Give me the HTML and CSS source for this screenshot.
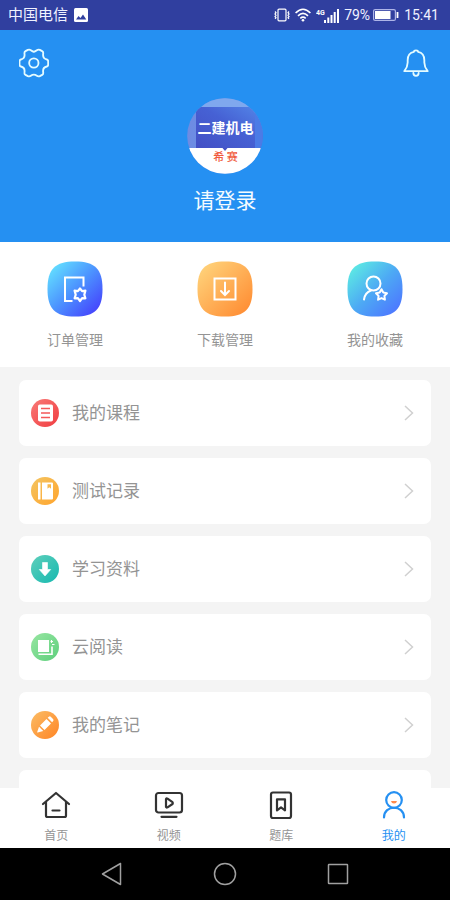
FILE: index.html
```html
<!DOCTYPE html>
<html lang="zh-CN">
<head>
<meta charset="utf-8">
<meta name="viewport" content="width=device-width, initial-scale=1">
<title>我的</title>
<link rel="stylesheet" href="styles.css">
</head>
<body>
<div class="status">
  <span class="carrier">中国电信</span>
  <svg class="photo" width="14" height="14" viewBox="0 0 14 14"><rect width="14" height="14" rx="1.5" fill="#fff"/><path d="M2 11.500 4.500 8l2 2L9 6.500l3.300 5z" fill="#303f9f"/></svg>
  <span class="signals">
    <svg width="16" height="14" viewBox="0 0 16 14" fill="none" stroke="#fff" stroke-width="1.200"><rect x="4" y="1.200" width="8" height="11.600" rx="1"/><path d="M1 3.500 2 4.700 1 6l1 1.300L1 8.500l1 1.300-1 1M15 3.500 14 4.700 15 6l-1 1.300 1 1.200-1 1.300 1 1"/></svg>
    <svg width="16" height="14" viewBox="0 0 16 14" fill="none" stroke="#fff" stroke-width="1.600"><path d="M.6 5Q8-2.500 15.400 5M3 7.800q5-4.700 10 0M5.300 10.300q2.700-2.400 5.400 0"/><circle cx="8" cy="12.200" r="1.300" fill="#fff" stroke="none"/></svg>
    <svg width="23" height="15" viewBox="0 0 23 15"><text x="0" y="7" class="net">4G</text><path d="M8 12h2v3H8zM11.300 9.500h2V15h-2zM14.500 7h2v8h-2zM17.700 4h2v11h-2zM21 1h2v14h-2z" fill="#fff"/></svg>
    <span class="level">79%</span>
    <svg width="26" height="12" viewBox="0 0 26 12"><rect x=".6" y=".6" width="21.800" height="10.800" rx="1.500" fill="none" stroke="#aeb5e8" stroke-width="1.200"/><rect x="2" y="2" width="15.500" height="8" fill="#fff"/><path d="M24.500 3v6" stroke="#fff" stroke-width="1.800"/></svg>
    <time>15:41</time>
  </span>
</div>

<header class="profile">
  <div class="tools">
    <button type="button" aria-label="设置"><svg width="30" height="30" viewBox="58.500 143.500 90 90" fill="none" stroke="#e4fbff" stroke-width="5.500" stroke-linejoin="round"><path d="M103 155Q108 153 112 150Q116 147 121 149L128 153Q132 155 131 161Q129 175 142 178Q146 179 146 184V193Q146 198 142 199Q129 202 131 216Q132 222 128 224L121 228Q116 230 112 227Q103 220 94 227Q90 230 85 228L78 224Q74 222 75 216Q77 202 64 199Q60 198 60 193V184Q60 179 64 178Q77 175 75 161Q74 155 78 153L85 149Q90 147 94 150Q98 153 103 155Z"/><circle cx="103" cy="188.500" r="14"/></svg></button>
    <button type="button" aria-label="消息"><svg width="30" height="30" viewBox="527 144.500 90 90" fill="none" stroke="#e4fbff" stroke-width="5.500" stroke-linecap="round" stroke-linejoin="round"><path d="M537 214C544 205 547 199 547 188V181C547 167 555 158 566 156C566 150 578 150 578 156C589 158 597 167 597 181V188C597 199 600 205 607 214ZM564 219C564 231 580 231 580 219"/></svg></button>
  </div>
  <svg class="avatar" width="76" height="76" viewBox="0 0 76 76">
    <defs>
      <linearGradient id="face" x1="0" y1="1" x2="1" y2="0"><stop offset="0" stop-color="#434fc4"/><stop offset=".55" stop-color="#4661d4"/><stop offset="1" stop-color="#5487e8"/></linearGradient>
      <linearGradient id="edge" x1="0" x2="1"><stop offset="0" stop-color="#6f8be2"/><stop offset="1" stop-color="#5a9bf0"/></linearGradient>
      <clipPath id="round"><circle cx="38" cy="38" r="37.800"/></clipPath>
    </defs>
    <g clip-path="url(#round)">
      <rect width="76" height="76" fill="url(#edge)"/>
      <rect width="76" height="9" fill="#7fa8ee"/>
      <rect x="9" y="9" width="67" height="42" fill="url(#face)"/>
      <rect x="68" y="9" width="8" height="42" fill="#4b7be6"/>
      <rect y="50" width="76" height="26" fill="#fff"/>
      <path d="M35.500 50h5L38 53z" fill="#4450c4"/>
      <text x="38.500" y="35" class="badge-title">二建机电</text>
      <text x="38.500" y="63" class="badge-brand">希 赛</text>
    </g>
  </svg>
  <a class="login" href="#">请登录</a>
</header>

<nav class="shortcuts" aria-label="管理">
  <a href="#">
    <svg width="56" height="56" viewBox="0 0 56 56"><defs><linearGradient id="g1" x1=".1" y1=".1" x2=".9" y2=".9"><stop offset="0" stop-color="#62dcff"/><stop offset=".5" stop-color="#4c92ff"/><stop offset="1" stop-color="#4545fc"/></linearGradient></defs><path d="M28 .5C48 .5 55.500 8 55.500 28S48 55.500 28 55.500.5 48 .5 28 8 .5 28 .5Z" fill="url(#g1)"/><path d="M25.500 40H18V16.500h18.500v9" fill="none" stroke="#fff" stroke-width="2"/><path d="m33 27.500 2.100 2.600 3.300-.5-1.100 4.100 1.100 3.600-3.300-.2L33 40l-2.100-2.900-3.300.2 1.100-3.600-1.100-4.100 3.300.5z" fill="none" stroke="#fff" stroke-width="2.200" stroke-linejoin="round"/></svg>
    <span>订单管理</span>
  </a>
  <a href="#">
    <svg width="56" height="56" viewBox="0 0 56 56"><defs><linearGradient id="g2" x1=".1" y1=".1" x2=".9" y2=".9"><stop offset="0" stop-color="#ffd078"/><stop offset="1" stop-color="#ff8f35"/></linearGradient></defs><path d="M28 .5C48 .5 55.500 8 55.500 28S48 55.500 28 55.500.5 48 .5 28 8 .5 28 .5Z" fill="url(#g2)"/><path d="M17.500 17.500h21v21h-21zM28 21.500v12M24 30l4 4 4-4" fill="none" stroke="#fff" stroke-width="2" stroke-linecap="round"/></svg>
    <span>下载管理</span>
  </a>
  <a href="#">
    <svg width="56" height="56" viewBox="0 0 56 56"><defs><linearGradient id="g3" x1=".1" y1=".1" x2=".9" y2=".9"><stop offset="0" stop-color="#5ce8e4"/><stop offset=".5" stop-color="#4daaf4"/><stop offset="1" stop-color="#4d78ff"/></linearGradient></defs><path d="M28 .5C48 .5 55.500 8 55.500 28S48 55.500 28 55.500.5 48 .5 28 8 .5 28 .5Z" fill="url(#g3)"/><g fill="none" stroke="#fff" stroke-width="2" stroke-linecap="round" stroke-linejoin="round"><circle cx="26.500" cy="22.500" r="7"/><path d="M24 29.500q-6 2-7 9"/><path d="m34.500 28.200 1.800 3.300 3.700.7-2.600 2.700.5 3.800-3.400-1.600-3.400 1.600.5-3.800-2.600-2.700 3.700-.7z" fill="#4e96fa"/></g></svg>
    <span>我的收藏</span>
  </a>
</nav>

<main class="list">
  <a class="card" href="#">
    <svg width="28" height="28" viewBox="0 0 28 28"><defs><linearGradient id="r1" x2="1" y2="1"><stop offset="0" stop-color="#f97a77"/><stop offset="1" stop-color="#f03c40"/></linearGradient></defs><circle cx="14" cy="14" r="14" fill="url(#r1)"/><rect x="7" y="5.500" width="15" height="17" rx="1.800" fill="#fff"/><path d="M10 9.500h9M10 14h9M10 18.500h9" stroke="#f4585a" stroke-width="1.700"/></svg>
    <span>我的课程</span>
    <svg class="chevron" width="10" height="16" viewBox="0 0 10 16"><path d="m1 1 7.500 7L1 15"/></svg>
  </a>
  <a class="card" href="#">
    <svg width="28" height="28" viewBox="0 0 28 28"><defs><linearGradient id="r2" x2="1" y2="1"><stop offset="0" stop-color="#f4c562"/><stop offset="1" stop-color="#ffa42c"/></linearGradient></defs><circle cx="14" cy="14" r="14" fill="url(#r2)"/><path d="M7 5.500h2.500v17H7zM11 5.500h10a1 1 0 0 1 1 1v15a1 1 0 0 1-1 1H11z" fill="#fff"/><path d="M16.500 7.200H20v4.600l-1.700-1.500-1.800 1.500z" fill="#f7b84b"/></svg>
    <span>测试记录</span>
    <svg class="chevron" width="10" height="16" viewBox="0 0 10 16"><path d="m1 1 7.500 7L1 15"/></svg>
  </a>
  <a class="card" href="#">
    <svg width="28" height="28" viewBox="0 0 28 28"><defs><linearGradient id="r3" x2="1" y2="1"><stop offset="0" stop-color="#5fcfbb"/><stop offset="1" stop-color="#16b9b0"/></linearGradient></defs><circle cx="14" cy="14" r="14" fill="url(#r3)"/><path d="M11.500 7.500h5v7h3.200L14 21l-5.700-6.500h3.200z" fill="#fff" stroke="#fff" stroke-width=".6" stroke-linejoin="round"/></svg>
    <span>学习资料</span>
    <svg class="chevron" width="10" height="16" viewBox="0 0 10 16"><path d="m1 1 7.500 7L1 15"/></svg>
  </a>
  <a class="card" href="#">
    <svg width="28" height="28" viewBox="0 0 28 28"><defs><linearGradient id="r4" x2="1" y2="1"><stop offset="0" stop-color="#98e6a2"/><stop offset="1" stop-color="#5dcf7c"/></linearGradient></defs><circle cx="14" cy="14" r="14" fill="url(#r4)"/><path d="M7 7h11v12H7z" fill="#fff"/><path d="M7.500 21.200H21V13.500" fill="none" stroke="#fff" stroke-width="1.600"/><path d="M20.500 7v3M19.500 8.500h2.500M21 11.500h2.500" stroke="#fff" stroke-width="1.100"/></svg>
    <span>云阅读</span>
    <svg class="chevron" width="10" height="16" viewBox="0 0 10 16"><path d="m1 1 7.500 7L1 15"/></svg>
  </a>
  <a class="card" href="#">
    <svg width="28" height="28" viewBox="0 0 28 28"><defs><linearGradient id="r5" x2="1" y2="1"><stop offset="0" stop-color="#fbbd66"/><stop offset="1" stop-color="#ff8424"/></linearGradient></defs><circle cx="14" cy="14" r="14" fill="url(#r5)"/><path d="m9 14.500 6.500-6.500 4.500 4.500-6.500 6.500zM16.700 6.800l1.100-1.100q1.200-.8 2.200.2l2 2q1 1 .2 2.200l-1.100 1.100zM8 15.700l4.300 4.300-5.600 1.600q-.7 0-.5-.6z" fill="#fff"/></svg>
    <span>我的笔记</span>
    <svg class="chevron" width="10" height="16" viewBox="0 0 10 16"><path d="m1 1 7.500 7L1 15"/></svg>
  </a>
  <div class="card"></div>
</main>

<nav class="tabs" aria-label="主导航">
  <a href="#">
    <svg width="30" height="30" viewBox="0 0 30 30" fill="none" stroke="#333" stroke-width="2.200" stroke-linecap="round" stroke-linejoin="round"><path d="M2 14 15 3l13 11M5 12v13.500q0 1.500 1.500 1.500h17q1.500 0 1.500-1.500V12M11.500 20.500h7"/></svg>
    <span>首页</span>
  </a>
  <a href="#">
    <svg width="30" height="30" viewBox="0 0 30 30" fill="none" stroke="#333" stroke-width="2.200" stroke-linecap="round" stroke-linejoin="round"><rect x="2" y="3" width="26" height="19.500" rx="2.500"/><path d="M12 9v8q.5.800 1.500.3l5-3.300q.7-1 0-1.800l-5-3.500Q12.500 8.200 12 9ZM7.500 26.800h15"/></svg>
    <span>视频</span>
  </a>
  <a href="#">
    <svg width="30" height="30" viewBox="0 0 30 30" fill="none" stroke="#333" stroke-width="2.200" stroke-linejoin="round"><rect x="5" y="2.500" width="20" height="25.500" rx="2"/><path d="M11 9.300h8v11l-4-3-4 3z"/></svg>
    <span>题库</span>
  </a>
  <a class="current" href="#" aria-current="page">
    <svg width="30" height="30" viewBox="0 0 30 30" fill="none" stroke="#2590f2" stroke-width="2.200" stroke-linecap="round"><circle cx="15" cy="10" r="7.800"/><path d="M5 27.500C5 14.500 25 14.500 25 27.500"/><path d="M12 11h6q-.5 2.500-3 2.500t-3-2.500z" fill="#ff8a4c" stroke="none"/></svg>
    <span>我的</span>
  </a>
</nav>

<footer class="system">
  <button type="button" aria-label="返回"><svg width="24" height="24" viewBox="0 0 24 24"><path d="M20.500 1.500v21L2.500 12z"/></svg></button>
  <button type="button" aria-label="主屏幕"><svg width="24" height="24" viewBox="0 0 24 24"><circle cx="12" cy="12" r="10.500"/></svg></button>
  <button type="button" aria-label="最近任务"><svg width="24" height="24" viewBox="0 0 24 24"><rect x="2.500" y="2.500" width="19" height="19" rx=".5"/></svg></button>
</footer>
</body>
</html>
```
FILE: styles.css
```css
* {
  box-sizing: border-box;
}

body {
  margin: 0;
  height: 100vh;
  display: flex;
  flex-direction: column;
  overflow: hidden;
  background: #f4f4f4;
  color: #949494;
  font-family: Roboto, "Noto Sans CJK SC", sans-serif;
}

svg {
  display: block;
  flex: none;
}

a {
  color: inherit;
  text-decoration: none;
}

button {
  padding: 0;
  border: 0;
  background: none;
}

.status {
  flex: none;
  height: 30px;
  padding: 0 11px 0 8px;
  display: flex;
  align-items: center;
  background: #303f9f;
  color: #f0f2ff;
  font-size: 15px;
  line-height: 20px;
}

.photo {
  margin-left: 6px;
}

.signals {
  margin-left: auto;
  display: flex;
  align-items: center;
  gap: 5px;
  font-size: 14px;
}

.level {
  margin-right: -2px;
}

.net {
  fill: #fff;
  font-size: 7px;
  font-weight: 700;
}

.profile {
  flex: none;
  padding: 18px 19px 25px;
  display: flex;
  flex-direction: column;
  align-items: center;
  background: #2590f2;
}

.tools {
  align-self: stretch;
  display: flex;
  justify-content: space-between;
}

.avatar {
  margin-top: 20px;
}

.badge-title,
.badge-brand {
  text-anchor: middle;
}

.badge-title {
  fill: #fff;
  font-size: 14px;
  font-weight: 700;
}

.badge-brand {
  fill: #f0593c;
  font-size: 11px;
  font-weight: 500;
}

.login {
  margin-top: 11px;
  color: #f4fbff;
  font-size: 21px;
  line-height: 32px;
}

.shortcuts {
  flex: none;
  padding: 19px 0 17px;
  display: grid;
  grid-template-columns: repeat(3, 1fr);
  background: #fff;
}

.shortcuts a {
  display: flex;
  flex-direction: column;
  align-items: center;
  gap: 13px;
  font-size: 14px;
  line-height: 20px;
}

.list {
  flex: 1;
  min-height: 0;
  padding: 13px 19px 0;
  display: flex;
  flex-direction: column;
  gap: 12px;
  overflow: hidden;
}

.card {
  flex: none;
  min-height: 66px;
  padding: 0 17px 0 12px;
  display: flex;
  align-items: center;
  gap: 13px;
  border-radius: 7px;
  background: #fff;
  font-size: 17px;
  line-height: 24px;
}

.chevron {
  margin-left: auto;
  fill: none;
  stroke: #d0d0d0;
  stroke-width: 1.5;
}

.tabs {
  flex: none;
  padding: 2px 0 3px;
  display: grid;
  grid-template-columns: repeat(4, 1fr);
  background: #fff;
}

.tabs a {
  display: flex;
  flex-direction: column;
  align-items: center;
  gap: 7px;
  font-size: 12px;
  line-height: 18px;
}

.tabs .current {
  color: #2590f2;
}

.system {
  flex: none;
  height: 52px;
  padding: 0 56px;
  display: grid;
  grid-template-columns: repeat(3, 1fr);
  align-items: center;
  justify-items: center;
  background: #000;
}

.system svg {
  fill: none;
  stroke: #a0a0a0;
  stroke-width: 1.5;
  stroke-linejoin: round;
}
```
